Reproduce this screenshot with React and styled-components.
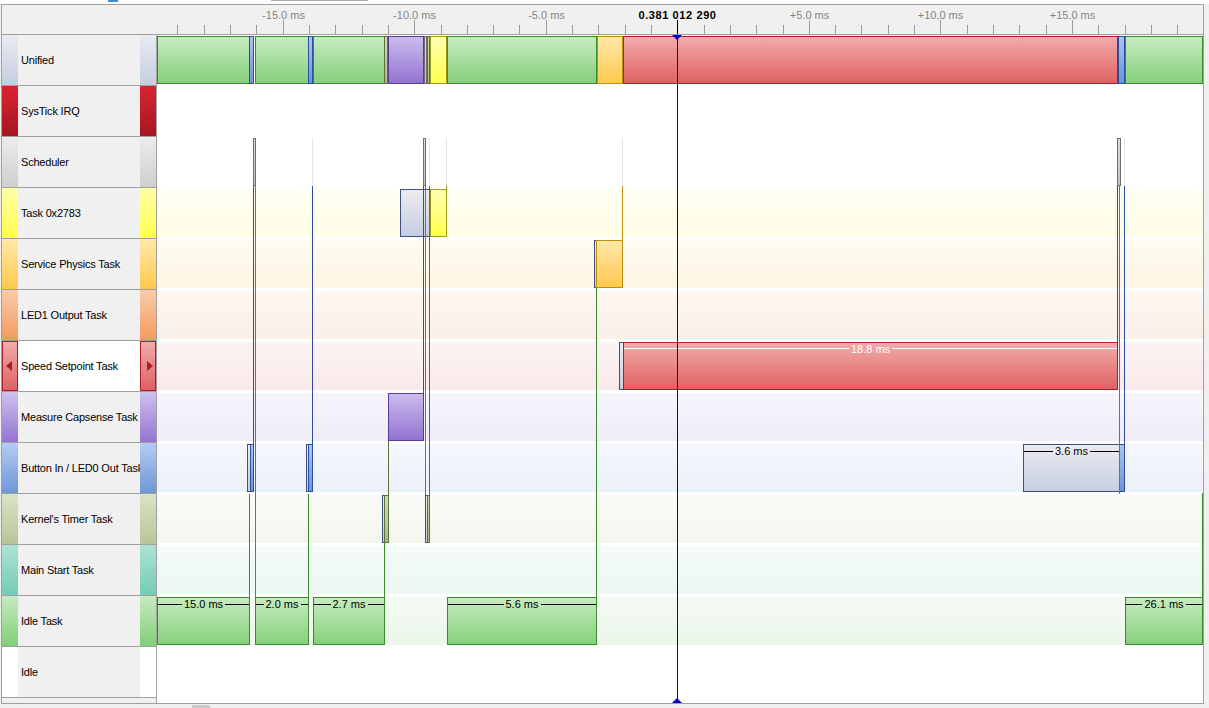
import React from 'react';
import styled, { createGlobalStyle, css } from 'styled-components';

// screen geometry of the time axis
const ORIGIN = 677.3; // x of the cursor (0.381 012 290)
const MS = 26.31; // pixels per millisecond
const CANVAS_X = 157;
const BODY_Y = 35;

const GlobalStyle = createGlobalStyle`
  html, body { margin: 0; padding: 0; background: #f0f0f0; }
  body {
    font-family: "Liberation Sans", Arial, sans-serif;
    font-size: 11px;
    overflow: hidden;
  }
`;

const KINDS = {
  idle: { top: '#c6ebbf', bottom: '#86d07c', border: '#3a8a2e' },
  button: { top: '#adc5ee', bottom: '#6b95d9', border: '#2b4f9e' },
  capsense: { top: '#cbbcec', bottom: '#9273d1', border: '#583c96' },
  task: { top: '#ffffb4', bottom: '#ffff4c', border: '#9c9c1c' },
  physics: { top: '#ffe7a8', bottom: '#ffc94e', border: '#bf8e0c' },
  speed: { top: '#f2abab', bottom: '#e06262', border: '#b11c28' },
  kernel: { top: '#d3ddb5', bottom: '#a9b982', border: '#5f6e3e' },
  ready: { top: '#ececf0', bottom: '#c6cee0', border: '#3f4f7e' },
  sched: { top: '#dcdcdc', bottom: '#c4c4c4', border: '#6e6e6e' },
};

// bars: [x0, x1, kind, label, lightLabel]
const ROWS = [
  {
    name: 'Unified', strip: ['#e8ebf1', '#c5cde0'],
    bars: [
      [157, 250, 'idle'], [249, 254, 'button'], [255, 309, 'idle'], [308, 313, 'button'],
      [313, 385, 'idle'], [384, 388, 'kernel'], [388, 424, 'capsense'], [424, 427, 'sched'],
      [427, 430, 'kernel'], [430, 447, 'task'], [447, 597, 'idle'], [597, 623, 'physics'],
      [623, 1118, 'speed'], [1118, 1125, 'button'], [1125, 1203, 'idle'],
    ],
  },
  { name: 'SysTick IRQ', strip: ['#d92333', '#a5171f'], bars: [] },
  {
    name: 'Scheduler', strip: ['#ececec', '#cfcfcf'],
    bars: [[253, 256, 'sched'], [423, 426, 'sched'], [1117, 1121, 'sched']],
  },
  {
    name: 'Task 0x2783', strip: ['#ffffa6', '#ffff4e'], band: ['#fffff2', '#fffee6'],
    bars: [[400, 431, 'ready'], [430, 447, 'task']],
  },
  {
    name: 'Service Physics Task', strip: ['#ffe8aa', '#ffc84c'], band: ['#fffbf2', '#fdf5e4'],
    bars: [[594, 597, 'ready'], [596, 623, 'physics']],
  },
  { name: 'LED1 Output Task', strip: ['#f8cbab', '#f49b5e'], band: ['#fdf7f2', '#fbefe8'], bars: [] },
  {
    name: 'Speed Setpoint Task', strip: ['#f2abab', '#e06262'], band: ['#fcf3f3', '#fae9e9'], selected: true,
    bars: [[619, 624, 'ready'], [623, 1118, 'speed', '18.8 ms', true]],
  },
  {
    name: 'Measure Capsense Task', strip: ['#cfc0ee', '#9474d2'], band: ['#f7f5fc', '#efecf8'],
    bars: [[388, 424, 'capsense']],
  },
  {
    name: 'Button In / LED0 Out Task', strip: ['#b5cbf1', '#6e97d8'], band: ['#f4f7fd', '#ebf0f9'],
    bars: [
      [247, 251, 'ready'], [250, 254, 'button'], [306, 309, 'ready'], [308, 313, 'button'],
      [1023, 1120, 'ready', '3.6 ms'], [1119, 1125, 'button'],
    ],
  },
  {
    name: "Kernel's Timer Task", strip: ['#dbe3c6', '#b7c598'], band: ['#fafbf6', '#f4f6ee'],
    bars: [[382, 385, 'ready'], [384, 389, 'kernel'], [425, 428, 'ready'], [427, 430, 'kernel']],
  },
  { name: 'Main Start Task', strip: ['#ace3d3', '#74cbb4'], band: ['#f4fbf8', '#edf7f3'], bars: [] },
  {
    name: 'Idle Task', strip: ['#c6ebbf', '#82cf78'], band: ['#f4fbf3', '#ecf6ea'],
    bars: [
      [157, 250, 'idle', '15.0 ms'], [255, 309, 'idle', '2.0 ms'], [313, 385, 'idle', '2.7 ms'],
      [447, 597, 'idle', '5.6 ms'], [1125, 1203, 'idle', '26.1 ms'],
    ],
  },
  { name: 'Idle', strip: ['#ffffff', '#ffffff'], bars: [] },
];

// context switch lines: [x, y0, y1, colour]
const LINKS = [
  [249, 494, 597, '#3a8a2e'],
  [253, 186, 444, '#2b4f9e'],
  [255, 186, 597, '#707070'],
  [308, 494, 597, '#3a8a2e'],
  [312, 186, 444, '#2b4f9e'],
  [384, 543, 597, '#3a8a2e'],
  [388, 441, 495, '#5f6e3e'],
  [423, 186, 393, '#583c96'],
  [425, 186, 495, '#707070'],
  [429, 186, 495, '#5f6e3e'],
  [446, 186, 190, '#9c9c1c'],
  [596, 288, 597, '#3a8a2e'],
  [622, 186, 240, '#bf8e0c'],
  [1117, 186, 342, '#b11c28'],
  [1119, 186, 494, '#707070'],
  [1124, 186, 444, '#2b4f9e'],
  [1202, 493, 597, '#3a8a2e'],
  [312, 138, 186, '#e4e4e4'],
  [429, 138, 186, '#e4e4e4'],
  [446, 138, 186, '#e4e4e4'],
  [622, 138, 186, '#e4e4e4'],
  [1124, 138, 186, '#e4e4e4'],
];

const TICKS = Array.from({ length: 39 }, (_, i) => i - 19);

const TopStrip = styled.div`
  height: 4px;
  background: #fff;
  display: flex;
  align-items: flex-start;
  padding-left: 108px;
`;

const TabMark = styled.div`
  width: 10px;
  height: 2px;
  background: #3b8fe3;
`;

const ThumbMark = styled.div`
  margin-left: 153px;
  width: 97px;
  height: 1px;
  background: #acacac;
`;

const Frame = styled.div`
  margin-left: 1px;
  width: 1203px;
  height: 700px;
  box-sizing: border-box;
  border: 1px solid #a0a0a0;
  display: flex;
  flex-direction: column;
  background: #fff;
`;

const Ruler = styled.div`
  height: 30px;
  flex: none;
  box-sizing: border-box;
  border-bottom: 1px solid #a0a0a0;
  background: #f0f0f0;
  display: flex;
`;

const RulerCorner = styled.div`
  width: 155px;
  flex: none;
`;

const Scale = styled.div`
  position: relative;
  flex: 1;
`;

const Tick = styled.div`
  position: absolute;
  bottom: 0;
  width: 1px;
  height: ${(p) => (p.$major ? 14 : 9)}px;
  background: ${(p) => (p.$cursor ? '#000' : '#9c9c9c')};
`;

const TickLabel = styled.div`
  position: absolute;
  top: 4px;
  transform: translateX(-50%);
  white-space: nowrap;
  line-height: 13px;
  color: ${(p) => (p.$now ? '#000' : '#858585')};
  font-weight: ${(p) => (p.$now ? 700 : 400)};
  letter-spacing: ${(p) => (p.$now ? '0.6px' : '0')};
`;

const Body = styled.div`
  flex: 1;
  display: flex;
  min-height: 0;
`;

const Labels = styled.div`
  width: 154px;
  flex: none;
  border-right: 1px solid #a0a0a0;
  display: flex;
  flex-direction: column;
  background: #f0f0f0;
`;

const LabelRow = styled.div`
  height: 51px;
  flex: none;
  box-sizing: border-box;
  border-bottom: 1px solid #a0a0a0;
  display: flex;
`;

const Strip = styled.div`
  width: 16px;
  flex: none;
  box-sizing: border-box;
  background: linear-gradient(${(p) => p.$top}, ${(p) => p.$bottom});
  display: flex;
  align-items: center;
  justify-content: center;
  ${(p) =>
    p.$selected &&
    css`
      border: 1px solid #a81e2a;
      &::after {
        content: '';
        width: 0;
        height: 0;
        border-top: 5px solid transparent;
        border-bottom: 5px solid transparent;
        ${p.$side === 'left'
          ? 'border-right: 6px solid #a81e2a; margin-right: 3px;'
          : 'border-left: 6px solid #a81e2a; margin-left: 3px;'}
      }
    `}
`;

const LabelText = styled.div`
  flex: 1;
  min-width: 0;
  overflow: hidden;
  white-space: nowrap;
  padding-left: 3px;
  display: flex;
  align-items: center;
  letter-spacing: -0.2px;
  color: #000;
  background: ${(p) => (p.$selected ? '#fff' : '#f0f0f0')};
`;

const LabelFoot = styled.div`
  flex: 1;
  background: #f0f0f0;
`;

const Canvas = styled.div`
  position: relative;
  flex: 1;
  overflow: hidden;
  background: #fff;
`;

const Lane = styled.div`
  position: relative;
  height: 51px;
  box-sizing: border-box;
  padding-top: 1px;
`;

const Band = styled.div`
  height: 48px;
  background: ${(p) => (p.$band ? `linear-gradient(${p.$band[0]}, ${p.$band[1]})` : 'transparent')};
`;

const Bar = styled.div`
  position: absolute;
  top: 1px;
  height: 48px;
  box-sizing: border-box;
  border: 1px solid ${(p) => KINDS[p.$kind].border};
  background: linear-gradient(${(p) => KINDS[p.$kind].top}, ${(p) => KINDS[p.$kind].bottom});
  display: flex;
  flex-direction: column;
`;

const Measure = styled.div`
  display: flex;
  align-items: center;
  height: ${(p) => (p.$light ? 11 : 12)}px;
  line-height: 12px;
  color: ${(p) => (p.$light ? '#fff' : '#000')};
`;

const Rule = styled.div`
  flex: 1;
  height: 1px;
  background: currentColor;
`;

const MeasureText = styled.span`
  padding: 0 2px;
  white-space: nowrap;
`;

const Link = styled.div`
  position: absolute;
  width: 1px;
`;

const Cursor = styled.div`
  position: absolute;
  top: 0;
  bottom: 0;
  left: 520px;
  width: 1px;
  background: #0000c8;
  &::before,
  &::after {
    content: '';
    position: absolute;
    left: -5px;
    border-left: 5px solid transparent;
    border-right: 5px solid transparent;
  }
  &::before {
    top: 0;
    border-top: 5px solid #0000c8;
  }
  &::after {
    bottom: 0;
    border-bottom: 5px solid #0000c8;
  }
`;

const ScrollBar = styled.div`
  height: 4px;
  display: flex;
  align-items: flex-end;
  padding-left: 192px;
`;

const ScrollThumb = styled.div`
  width: 18px;
  height: 3px;
  background: #cdcdcd;
`;

const tickX = (t) => Math.round(ORIGIN + t * MS) - CANVAS_X;

function TimeBar({ bar }) {
  const [x0, x1, kind, label, light] = bar;
  return (
    <Bar $kind={kind} style={{ left: x0 - CANVAS_X, width: x1 - x0 }}>
      {label && (
        <Measure $light={light}>
          <Rule />
          <MeasureText>{label}</MeasureText>
          <Rule />
        </Measure>
      )}
    </Bar>
  );
}

export default function App() {
  return (
    <>
      <GlobalStyle />
      <TopStrip>
        <TabMark />
        <ThumbMark />
      </TopStrip>
      <Frame>
        <Ruler>
          <RulerCorner />
          <Scale>
            {TICKS.map((t) => (
              <Tick key={t} $major={t % 5 === 0} $cursor={t === 0} style={{ left: tickX(t) }} />
            ))}
            {TICKS.filter((t) => t % 5 === 0).map((t) => (
              <TickLabel key={t} $now={t === 0} style={{ left: tickX(t) + 0.5 }}>
                {t === 0 ? '0.381 012 290' : `${t > 0 ? '+' : ''}${t}.0 ms`}
              </TickLabel>
            ))}
          </Scale>
        </Ruler>
        <Body>
          <Labels>
            {ROWS.map((row) => (
              <LabelRow key={row.name}>
                <Strip $top={row.strip[0]} $bottom={row.strip[1]} $selected={row.selected} $side="left" />
                <LabelText $selected={row.selected}>{row.name}</LabelText>
                <Strip $top={row.strip[0]} $bottom={row.strip[1]} $selected={row.selected} $side="right" />
              </LabelRow>
            ))}
            <LabelFoot />
          </Labels>
          <Canvas>
            {ROWS.map((row) => (
              <Lane key={row.name}>
                <Band $band={row.band} />
                {row.bars.map((bar, i) => (
                  <TimeBar key={i} bar={bar} />
                ))}
              </Lane>
            ))}
            {LINKS.map(([x, y0, y1, color], i) => (
              <Link
                key={i}
                style={{ left: x - CANVAS_X, top: y0 - BODY_Y, height: y1 - y0, background: color }}
              />
            ))}
            <Cursor />
          </Canvas>
        </Body>
      </Frame>
      <ScrollBar>
        <ScrollThumb />
      </ScrollBar>
    </>
  );
}
